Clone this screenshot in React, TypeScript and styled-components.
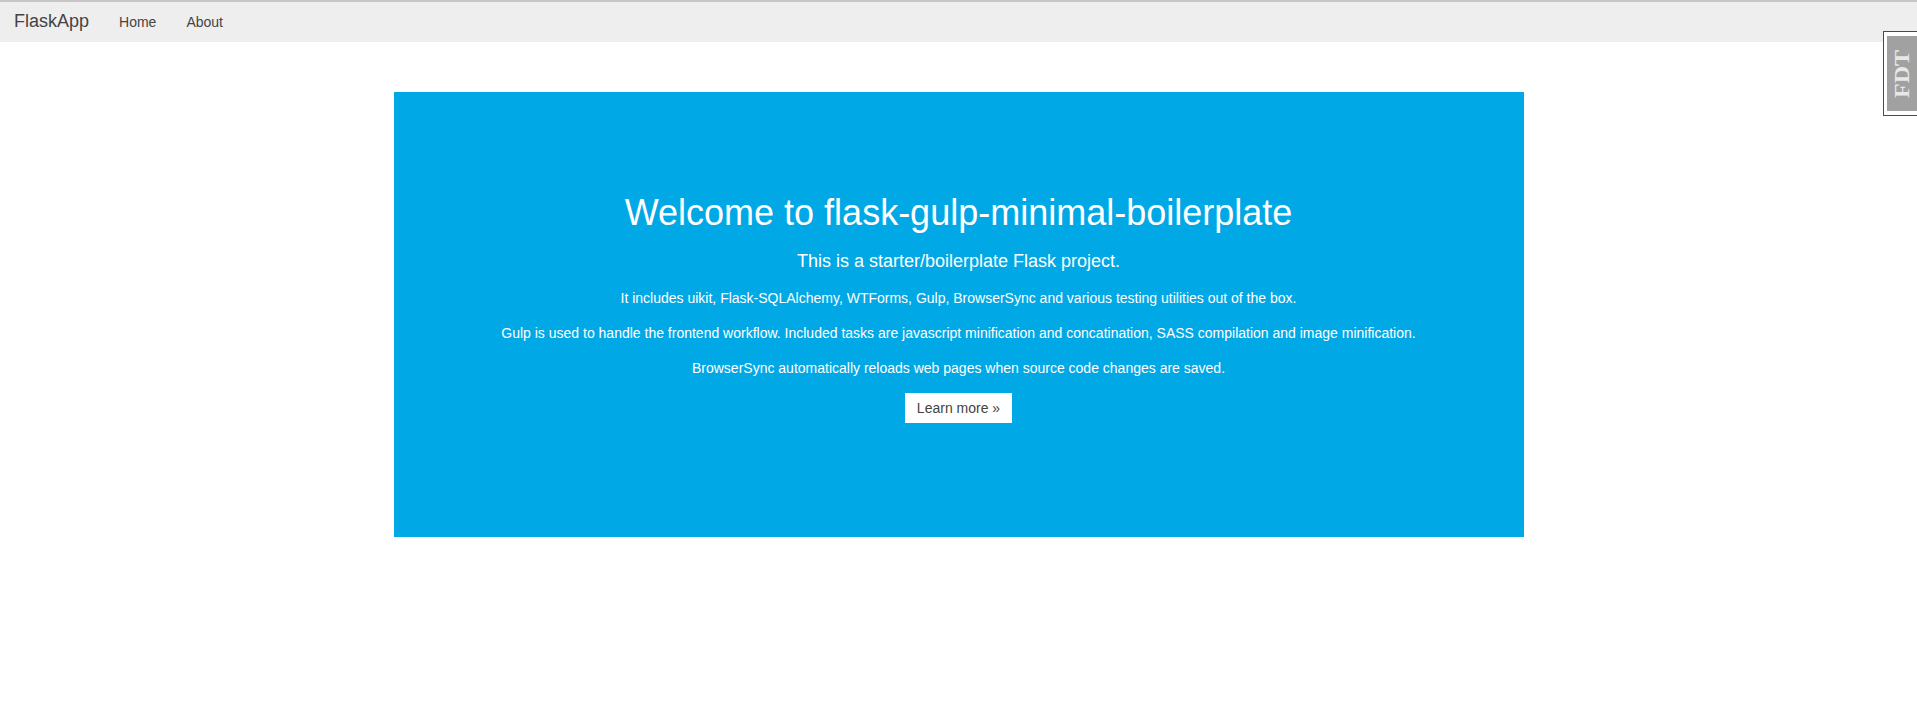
import React from "react";
import styled, { createGlobalStyle } from "styled-components";

const GlobalStyle = createGlobalStyle`
  html, body {
    margin: 0;
    padding: 0;
    background: #fff;
  }
  body {
    font-family: "Liberation Sans", Arial, Helvetica, sans-serif;
    font-size: 14px;
    line-height: 20px;
    color: #444;
    border-top: 2px solid #c6c6c6;
  }
`;

const Navbar = styled.nav`
  display: flex;
  align-items: stretch;
  height: 40px;
  background: #eee;
`;

const Brand = styled.a`
  display: flex;
  align-items: center;
  padding: 0 15px 3px 14px;
  font-size: 18px;
  color: #444;
  text-decoration: none;
`;

const NavLink = styled.a`
  display: flex;
  align-items: center;
  padding: 0 15px;
  font-size: 14px;
  color: #444;
  text-decoration: none;
`;

const Container = styled.main`
  width: 1130px;
  margin: 50px auto 0;
`;

const Hero = styled.section`
  background: #00a8e6;
  color: #fff;
  padding: 100px 0;
  text-align: center;
`;

const Title = styled.h1`
  margin: 0 0 15px;
  font-size: 36px;
  line-height: 42px;
  font-weight: 400;
`;

const Lead = styled.p`
  margin: 0 0 15px;
  font-size: 18px;
  line-height: 24px;
`;

const Text = styled.p`
  margin: 0 0 15px;
  font-size: 14px;
  line-height: 20px;
`;

const ButtonRow = styled.p`
  display: flex;
  justify-content: center;
  margin: 15px 0 14px;
`;

const Button = styled.a`
  display: inline-flex;
  align-items: center;
  height: 30px;
  padding: 0 12px;
  background: #fff;
  color: #444;
  font-size: 14px;
  text-decoration: none;
  box-sizing: border-box;
`;

const Handle = styled.div`
  position: fixed;
  top: 31px;
  right: 0;
  border: 1px solid #4a4a4a;
  border-right: none;
  background: #fff;
  padding: 4px 0 4px 3px;
`;

const HandleButton = styled.div`
  width: 30px;
  height: 75px;
  background: #a1a1a1;
  display: flex;
  align-items: center;
  justify-content: center;
`;

const HandleLabel = styled.span`
  display: block;
  transform: rotate(-90deg) scaleY(0.85);
  font-family: "Liberation Serif", "Times New Roman", serif;
  font-weight: 700;
  font-size: 24px;
  letter-spacing: 0;
  color: #e8e8e8;
  white-space: nowrap;
`;

export default function App() {
  return (
    <>
      <GlobalStyle />
      <Navbar>
        <Brand href="#">FlaskApp</Brand>
        <NavLink href="#">Home</NavLink>
        <NavLink href="#">About</NavLink>
      </Navbar>
      <Container>
        <Hero>
          <Title>Welcome to flask-gulp-minimal-boilerplate</Title>
          <Lead>This is a starter/boilerplate Flask project.</Lead>
          <Text>
            It includes uikit, Flask-SQLAlchemy, WTForms, Gulp, BrowserSync and various testing utilities out of the box.
          </Text>
          <Text>
            Gulp is used to handle the frontend workflow. Included tasks are javascript minification and concatination, SASS compilation and image minification.
          </Text>
          <Text>BrowserSync automatically reloads web pages when source code changes are saved.</Text>
          <ButtonRow>
            <Button href="#">Learn more »</Button>
          </ButtonRow>
        </Hero>
      </Container>
      <Handle>
        <HandleButton>
          <HandleLabel>FDT</HandleLabel>
        </HandleButton>
      </Handle>
    </>
  );
}
